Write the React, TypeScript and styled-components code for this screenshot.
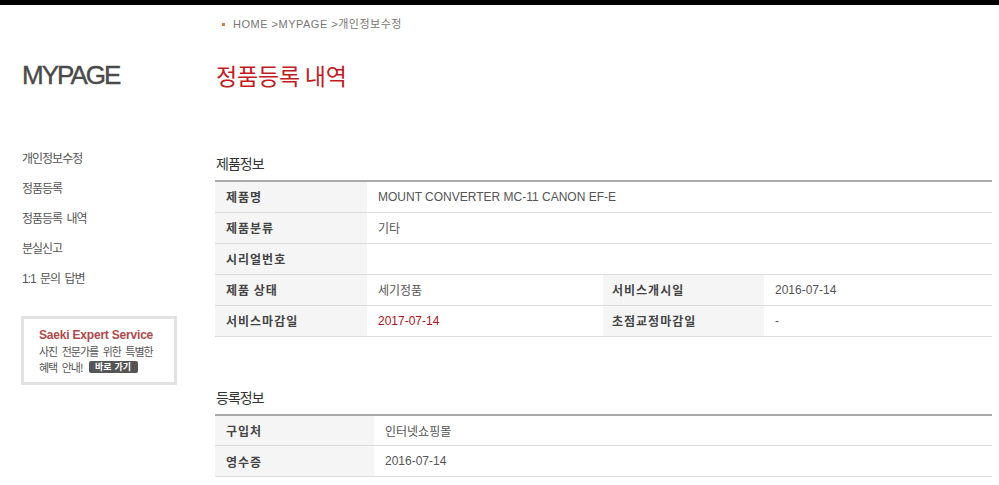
import React from "react";
import styled, { createGlobalStyle } from "styled-components";

const Global = createGlobalStyle`
  html, body { margin: 0; padding: 0; background: #fff; }
  body { font-family: "Liberation Sans", "Noto Sans CJK KR", sans-serif; color: #555; }
  * { box-sizing: border-box; }
`;

const TopBar = styled.div`
  height: 5px;
  background: #000;
`;

const Page = styled.div`
  display: flex;
  align-items: flex-start;
  width: 999px;
`;

const Sidebar = styled.aside`
  width: 215px;
  flex: none;
  padding: 55px 0 0 22px;
`;

const Brand = styled.div`
  font-family: "Liberation Sans", Arial, sans-serif;
  font-size: 26px;
  line-height: 30px;
  letter-spacing: -2px;
  color: #4a4a4a;
  font-weight: 400;
  -webkit-text-stroke: 0.4px #4a4a4a;
`;

const Nav = styled.ul`
  list-style: none;
  margin: 54px 0 0;
  padding: 0;
`;

const NavItem = styled.li`
  font-family: "Liberation Sans", "Noto Sans CJK KR", sans-serif;
  font-size: 12px;
  line-height: 30px;
  letter-spacing: -1px;
  word-spacing: 2px;
  color: #555;
`;

const Banner = styled.div`
  margin: 22px 0 0 -1px;
  width: 156px;
  border: 3px solid #e2e2e2;
  padding: 8px 0 7px 15px;
`;

const BannerTitle = styled.div`
  font-family: "Liberation Sans", Arial, sans-serif;
  font-weight: 700;
  font-size: 12px;
  line-height: 16px;
  letter-spacing: -0.2px;
  color: #b0484c;
`;

const BannerText = styled.div`
  font-family: "Noto Sans CJK KR", sans-serif;
  font-size: 11px;
  line-height: 16px;
  letter-spacing: -1px;
  word-spacing: 3px;
  color: #555;
  white-space: nowrap;
  display: flex;
  align-items: center;
`;

const GoButton = styled.span`
  display: inline-block;
  margin-left: 6px;
  width: 49px;
  height: 12px;
  line-height: 12px;
  background: #555;
  color: #fff;
  border-radius: 2px;
  font-size: 9px;
  font-weight: 700;
  text-align: center;
  letter-spacing: 0;
  word-spacing: 1px;
`;

const Main = styled.main`
  flex: 1;
  padding: 11px 7px 0 0;
`;

const Crumbs = styled.div`
  display: flex;
  align-items: center;
  padding-left: 7px;
  font-size: 11px;
  line-height: 16px;
  letter-spacing: 0.5px;
  color: #777;
  font-family: "Liberation Sans", "Noto Sans CJK KR", sans-serif;
`;

const Bullet = styled.span`
  width: 3px;
  height: 3px;
  background: #e07b39;
  margin-right: 8px;
`;

const PageTitle = styled.h1`
  margin: 28px 0 0 1px;
  font-family: "Noto Sans CJK KR", sans-serif;
  font-weight: 400;
  font-size: 23px;
  line-height: 30px;
  letter-spacing: -0.2px;
  color: #c41a22;
`;

const SectionTitle = styled.h2<{ $top: number }>`
  margin: ${(p) => p.$top}px 0 7px 1px;
  font-family: "Noto Sans CJK KR", sans-serif;
  font-weight: 400;
  font-size: 14px;
  line-height: 20px;
  letter-spacing: -1px;
  color: #333;
`;

const Table = styled.table`
  width: 777px;
  table-layout: fixed;
  border-collapse: collapse;
  border-top: 2px solid #aaa;
`;

const Label = styled.th<{ $pad?: number }>`
  background: #f5f5f5;
  height: 31px;
  padding: 0 0 0 ${(p) => p.$pad ?? 11}px;
  border-bottom: 1px solid #dcdcdc;
  text-align: left;
  font-family: "Noto Sans CJK KR", sans-serif;
  font-weight: 700;
  font-size: 12px;
  letter-spacing: 1px;
  color: #444;
  white-space: nowrap;
`;

const Value = styled.td<{ $red?: boolean }>`
  height: 31px;
  padding: 0 0 0 11px;
  border-bottom: 1px solid #dcdcdc;
  font-family: "Liberation Sans", "Noto Sans CJK KR", sans-serif;
  font-size: 12px;
  color: ${(p) => (p.$red ? "#b3121a" : "#555")};
  white-space: nowrap;
`;

export default function App() {
  return (
    <>
      <Global />
      <TopBar />
      <Page>
        <Sidebar>
          <Brand>MYPAGE</Brand>
          <Nav>
            <NavItem>개인정보수정</NavItem>
            <NavItem>정품등록</NavItem>
            <NavItem>정품등록 내역</NavItem>
            <NavItem>분실신고</NavItem>
            <NavItem>1:1 문의 답변</NavItem>
          </Nav>
          <Banner>
            <BannerTitle>Saeki Expert Service</BannerTitle>
            <BannerText>사진 전문가를 위한 특별한</BannerText>
            <BannerText>
              혜택 안내!<GoButton>바로 가기</GoButton>
            </BannerText>
          </Banner>
        </Sidebar>
        <Main>
          <Crumbs>
            <Bullet />
            HOME &gt;MYPAGE &gt;개인정보수정
          </Crumbs>
          <PageTitle>정품등록 내역</PageTitle>

          <SectionTitle $top={63}>제품정보</SectionTitle>
          <Table>
            <colgroup>
              <col style={{ width: 152 }} />
              <col style={{ width: 236 }} />
              <col style={{ width: 161 }} />
              <col style={{ width: 228 }} />
            </colgroup>
            <tbody>
              <tr>
                <Label>제품명</Label>
                <Value colSpan={3}>MOUNT CONVERTER MC-11 CANON EF-E</Value>
              </tr>
              <tr>
                <Label>제품분류</Label>
                <Value colSpan={3}>기타</Value>
              </tr>
              <tr>
                <Label>시리얼번호</Label>
                <Value colSpan={3}></Value>
              </tr>
              <tr>
                <Label>제품 상태</Label>
                <Value>세기정품</Value>
                <Label $pad={9}>서비스개시일</Label>
                <Value>2016-07-14</Value>
              </tr>
              <tr>
                <Label>서비스마감일</Label>
                <Value $red>2017-07-14</Value>
                <Label $pad={9}>초점교정마감일</Label>
                <Value>-</Value>
              </tr>
            </tbody>
          </Table>

          <SectionTitle $top={50}>등록정보</SectionTitle>
          <Table>
            <colgroup>
              <col style={{ width: 159 }} />
              <col />
            </colgroup>
            <tbody>
              <tr>
                <Label>구입처</Label>
                <Value>인터넷쇼핑몰</Value>
              </tr>
              <tr>
                <Label>영수증</Label>
                <Value>2016-07-14</Value>
              </tr>
            </tbody>
          </Table>
        </Main>
      </Page>
    </>
  );
}
